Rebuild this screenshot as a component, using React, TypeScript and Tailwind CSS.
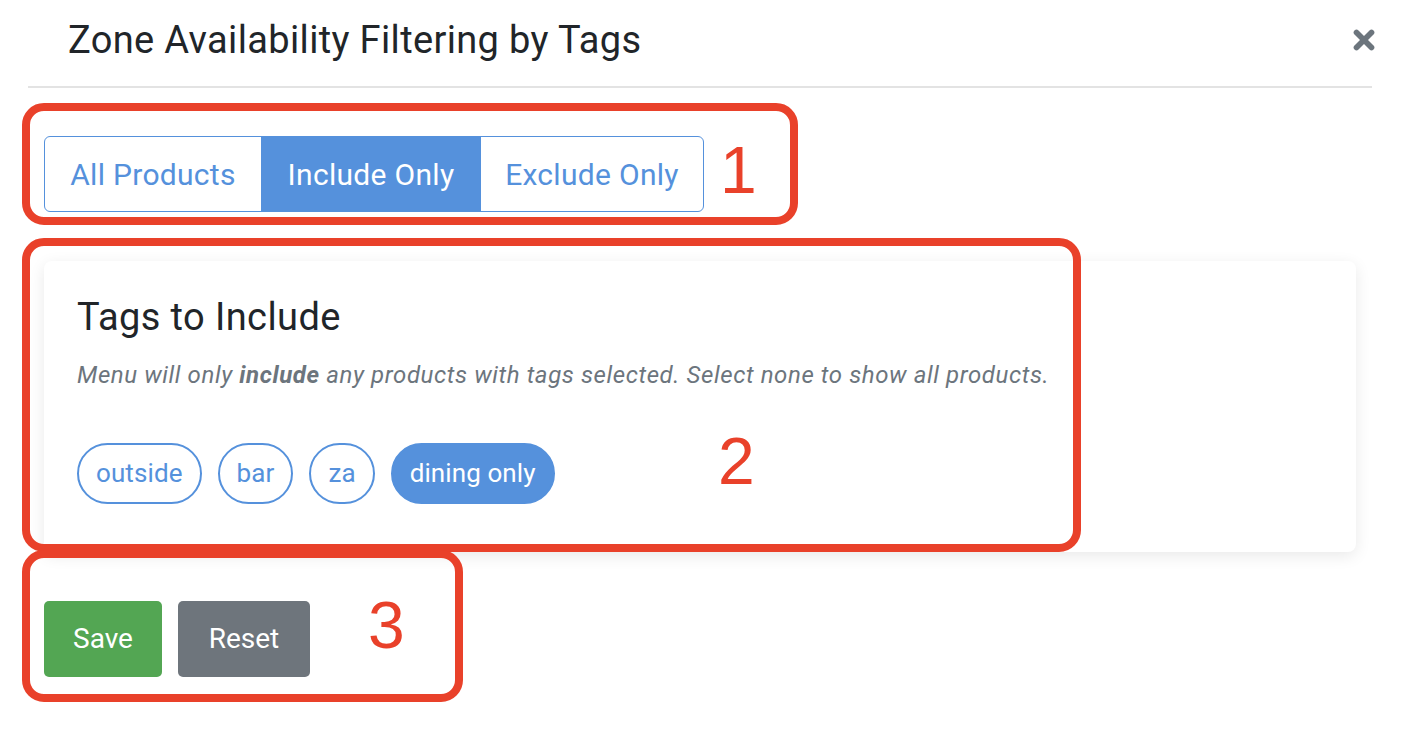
import { X } from 'lucide-react';

const tags = [
    { name: 'outside', active: false },
    { name: 'bar', active: false },
    { name: 'za', active: false },
    { name: 'dining only', active: true },
];

function Marker({ className, label, labelClass }: { className: string; label: string; labelClass: string }) {
    return (
        <div className={`absolute border-[8px] border-[#e9412a] rounded-[22px] pointer-events-none ${className}`}>
            <span className={`absolute text-[#e9412a] font-['Liberation_Sans'] text-[66px] leading-none ${labelClass}`}>
                {label}
            </span>
        </div>
    );
}

export default function App() {
    return (
        <div className="relative w-[1410px] h-[744px] bg-white font-['Roboto',sans-serif] overflow-hidden">
            {/* header */}
            <div className="ml-[28px] mr-[38px] h-[88px] border-b-2 border-[#e3e3e3] flex items-center justify-between pl-[40px] pb-[6px]">
                <h1 className="text-[38px] text-[#212529] tracking-[0.35px]">Zone Availability Filtering by Tags</h1>
                <button className="-mr-[7px] text-[#6c757d]">
                    <X className="w-[30px] h-[30px]" strokeWidth={4.5} />
                </button>
            </div>

            <div className="pl-[44px] pr-[54px]">
                {/* mode switch */}
                <div className="mt-[48px] inline-flex h-[76px] border border-[#5591dc] rounded-[6px] overflow-hidden text-[30px] tracking-[0.3px]">
                    <button className="w-[216px] text-[#5591dc]">All Products</button>
                    <button className="w-[220px] bg-[#5591dc] text-white">Include Only</button>
                    <button className="w-[222px] text-[#5591dc]">Exclude Only</button>
                </div>

                {/* tags card */}
                <div className="mt-[49px] h-[291px] bg-white rounded-[8px] shadow-[0_4px_16px_rgba(0,0,0,0.09)] pl-[33px] pt-[32px]">
                    <h2 className="text-[38px] leading-[48px] text-[#212529] tracking-[0.4px]">Tags to Include</h2>
                    <p className="mt-[18px] text-[24px] leading-[32px] italic text-[#6c757d] tracking-[0.6px]">
                        Menu will only <b>include</b> any products with tags selected. Select none to show all products.
                    </p>
                    <div className="mt-[52px] flex gap-[16px]">
                        {tags.map((t) => (
                            <span
                                key={t.name}
                                className={`h-[61px] px-[17px] flex items-center rounded-full border-2 border-[#5591dc] text-[26px] tracking-[0.1px] ${
                                    t.active ? 'bg-[#5591dc] text-white' : 'text-[#5591dc]'
                                }`}
                            >
                                {t.name}
                            </span>
                        ))}
                    </div>
                </div>

                {/* actions */}
                <div className="mt-[49px] flex gap-[16px]">
                    <button className="w-[118px] h-[76px] rounded-[5px] bg-[#53a653] text-white text-[28px]">Save</button>
                    <button className="w-[132px] h-[76px] rounded-[5px] bg-[#6e757c] text-white text-[28px]">Reset</button>
                </div>
            </div>

            {/* annotation overlays */}
            <Marker className="left-[22px] top-[103px] w-[776px] h-[122px]" label="1" labelClass="left-[690px] top-[26px]" />
            <Marker className="left-[22px] top-[238px] w-[1059px] h-[314px]" label="2" labelClass="left-[688px] top-[182px]" />
            <Marker className="left-[22px] top-[550px] w-[441px] h-[152px]" label="3" labelClass="left-[338px] top-[34px]" />
        </div>
    );
}
